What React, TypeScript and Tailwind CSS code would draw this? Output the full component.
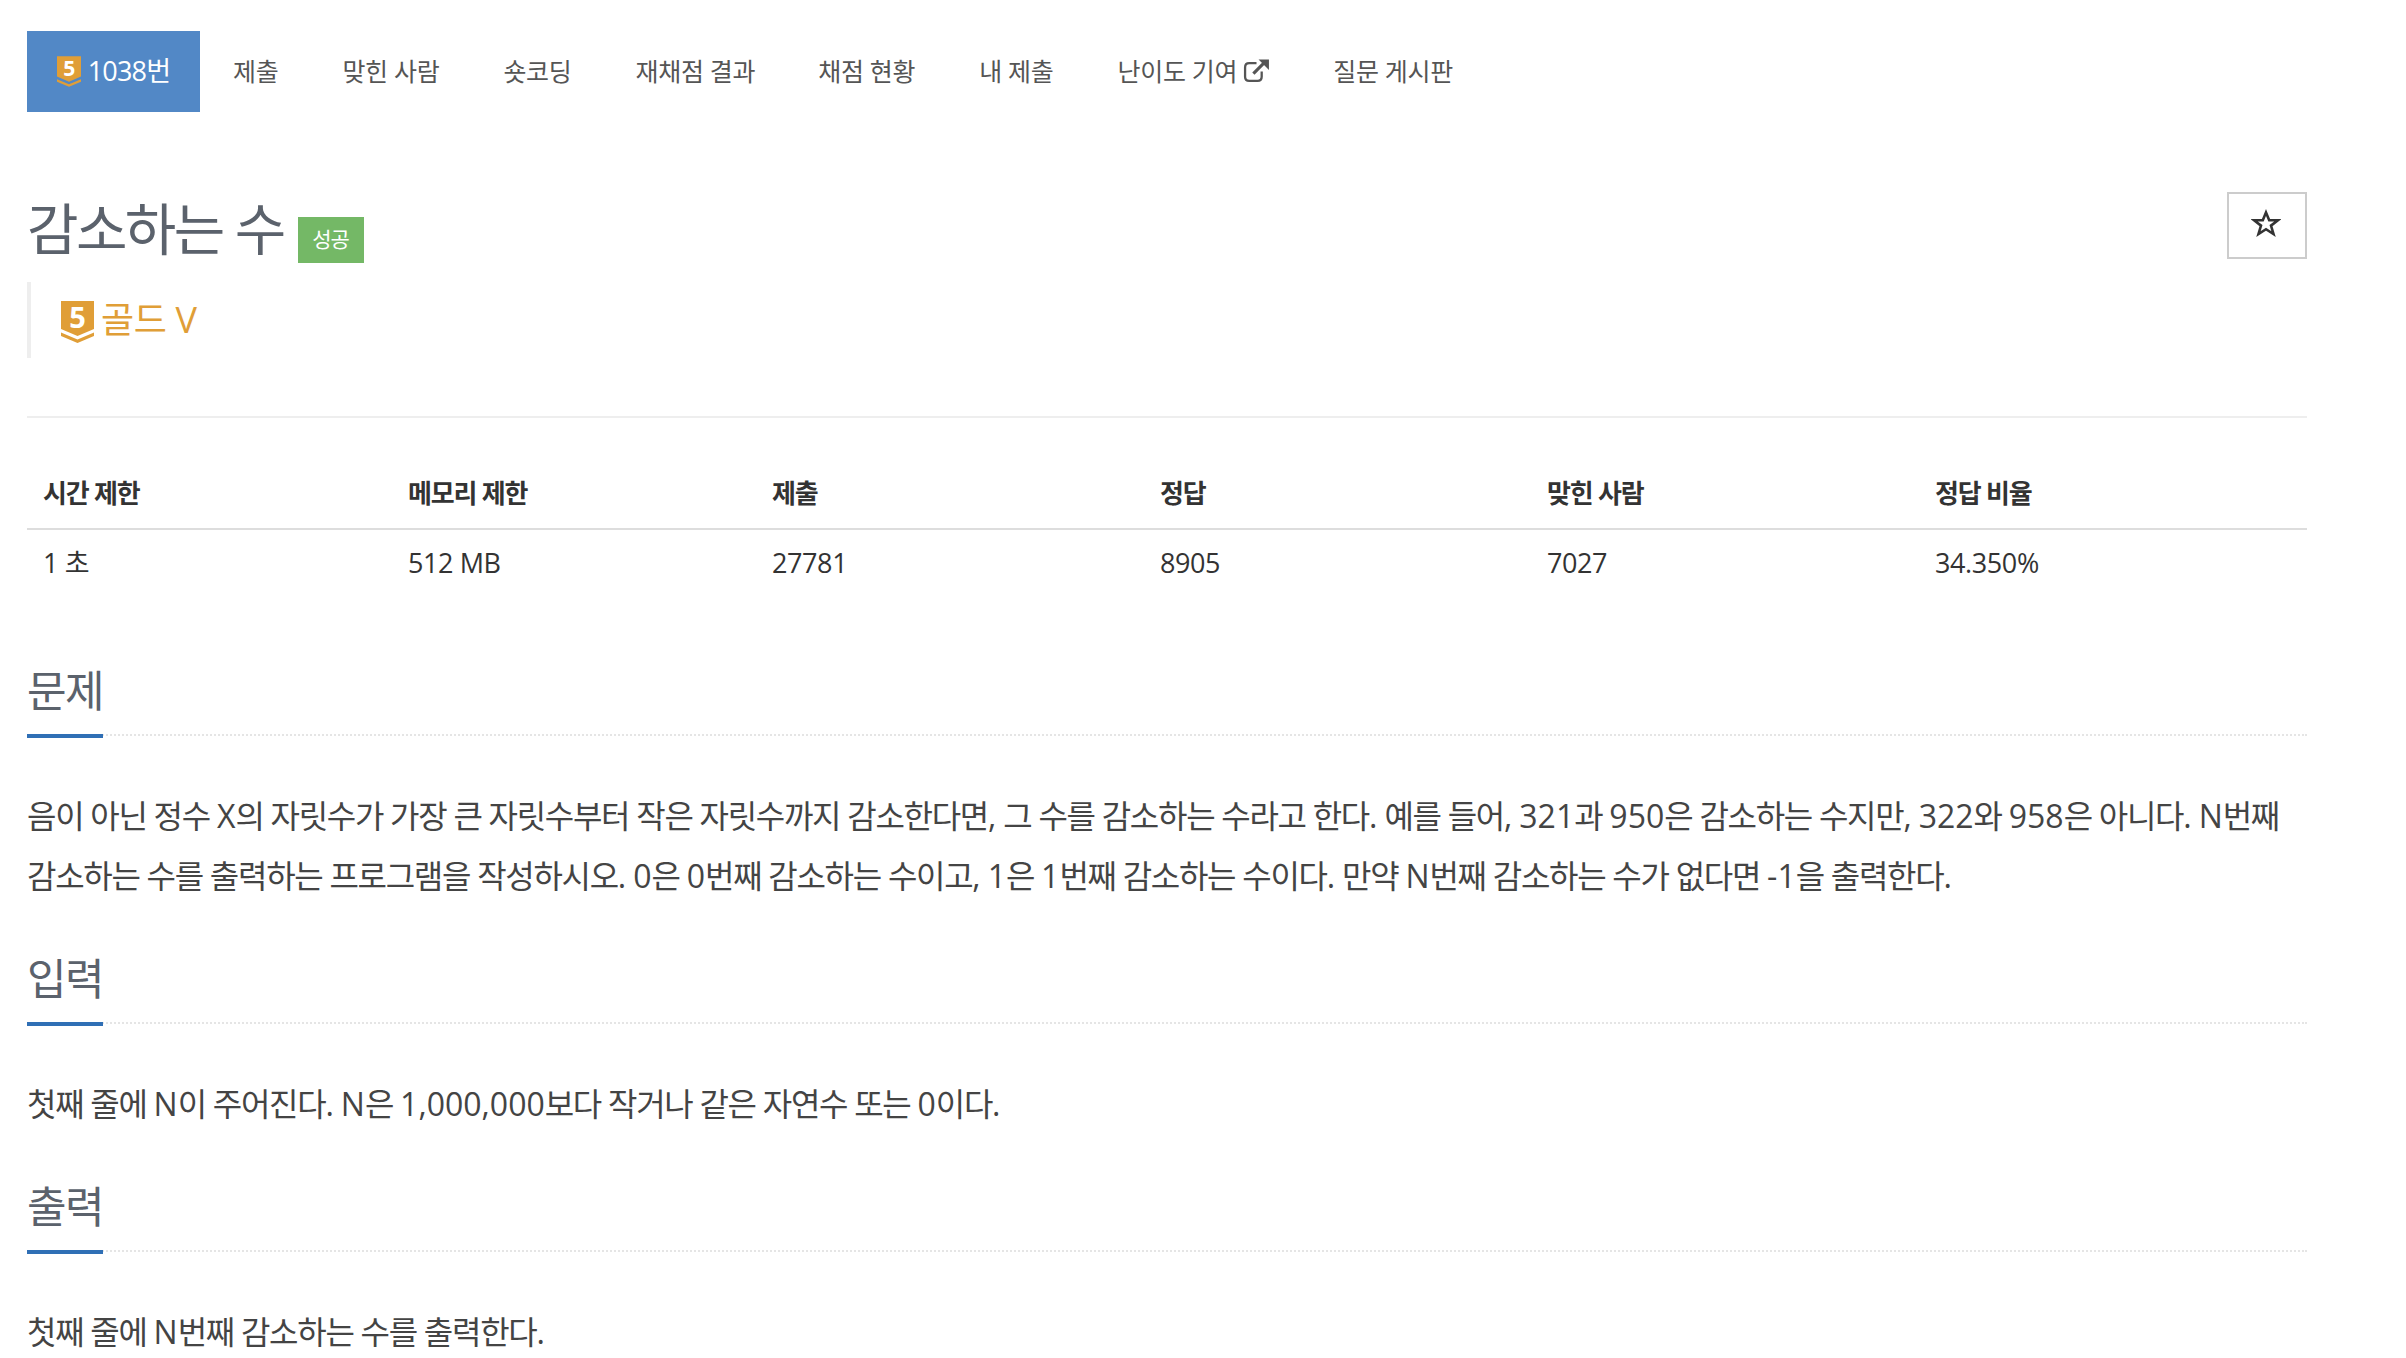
const FONT = "font-['Open_Sans','Noto_Sans_CJK_KR',sans-serif]";

function Tier({ w, h, size }: { w: number; h: number; size: number }) {
  return (
    <svg width={w} height={h} viewBox="0 0 33 42" className="shrink-0 overflow-visible">
      <path d="M0 0H33V28L16.5 35L0 28Z" fill="#e09e37" />
      <path d="M0 31.5L16.5 38.5L33 31.5V35L16.5 42L0 35Z" fill="#e09e37" />
      <text x="16.5" y="27" textAnchor="middle" fontSize={size} fontWeight="700" fill="#fff" fontFamily="Open Sans, sans-serif">5</text>
    </svg>
  );
}

function Tab({ label, ml, children }: { label: string; ml: string; children?: React.ReactNode }) {
  return (
    <a className={`flex h-[81px] items-center whitespace-nowrap text-[25px] tracking-[-0.3px] text-[#555] ${ml}`}>
      {label}
      {children}
    </a>
  );
}

function Mixed({ text }: { text: string }) {
  return (
    <>
      {text.split(/([A-Za-z0-9,.\-]+)/).map((part, i) =>
        i % 2 === 1 ? (
          <span key={i} className="tracking-[0px]">{part}</span>
        ) : (
          <span key={i} className="tracking-[-1.3px]">{part}</span>
        ),
      )}
    </>
  );
}

function Section({ title, text, mt }: { title: string; text: string; mt: string }) {
  return (
    <section className={mt}>
      <div className="h-[70px] border-b-2 border-dotted border-[#e5e5e5]">
        <h2 className="inline-block h-[72px] w-[76px] border-b-[4px] border-[#2f6fb5] text-[43px] leading-[50px] font-normal whitespace-nowrap text-[#5b626c] tracking-[-1.5px]">{title}</h2>
      </div>
      <p className="mt-[50px] text-[32px] leading-[60px] text-[#444]">
        <Mixed text={text} />
      </p>
    </section>
  );
}

export default function App() {
  const heads = ["시간 제한", "메모리 제한", "제출", "정답", "맞힌 사람", "정답 비율"];
  const vals = ["1 초", "512 MB", "27781", "8905", "7027", "34.350%"];
  const widths = ["w-[364px]", "w-[364px]", "w-[388px]", "w-[387px]", "w-[388px]", "w-[389px]"];
  return (
    <div className={`${FONT} h-[1358px] w-[2406px] overflow-hidden bg-white px-[27px] pt-[31px]`}>
      <div className="w-[2280px]">
        <nav className="flex">
          <a className="flex h-[81px] w-[173px] items-center justify-center gap-[7px] whitespace-nowrap bg-[#5288c6] text-[27px] tracking-[-0.8px] text-white">
            <Tier w={24} h={31} size={29} />
            1038번
          </a>
          <Tab label="제출" ml="ml-[33px]" />
          <Tab label="맞힌 사람" ml="ml-[64px]" />
          <Tab label="숏코딩" ml="ml-[64px]" />
          <Tab label="재채점 결과" ml="ml-[64px]" />
          <Tab label="채점 현황" ml="ml-[63px]" />
          <Tab label="내 제출" ml="ml-[64px]" />
          <Tab label="난이도 기여" ml="ml-[64px]">
            <svg width="27" height="25" viewBox="0 0 26 24" className="ml-[6px] mb-[2px]" fill="none" stroke="#555" strokeWidth="2.2">
              <path d="M18 13V18C18 20.5 16.5 22 14 22H6C3.5 22 2 20.5 2 18V9C2 6.5 3.5 5 6 5H13" />
              <path d="M10 15L22 3" strokeWidth="3" />
              <path d="M15 1.5H25V11.5Z" fill="#555" stroke="none" />
            </svg>
          </Tab>
          <Tab label="질문 게시판" ml="ml-[63px]" />
        </nav>

        <div className="relative mt-[71px] h-[235px] border-b-2 border-[#eee]">
          <div className="flex h-[90px] items-center">
            <h1 className="text-[56px] leading-[72px] font-normal tracking-[-2.6px] text-[#5b626c]">감소하는 수</h1>
            <span className="ml-[14px] mt-[24px] flex h-[46px] w-[66px] items-center justify-center bg-[#74b866] text-[21px] tracking-[-1px] text-white">성공</span>
          </div>
          <div className="mt-[9px] flex h-[76px] items-center gap-[7px] border-l-4 border-[#eee] pl-[30px] pt-[4px]">
            <Tier w={33} h={42} size={29} />
            <span className="mb-[4px] text-[36px] tracking-[-0.4px] text-[#e09e37]">골드 V</span>
          </div>
          <button className="absolute right-0 top-[9px] flex h-[67px] w-[80px] items-center justify-center border-2 border-[#ccc] bg-white pb-[6px] pr-[2px]">
            <svg width="30" height="28" viewBox="0 0 30 28" fill="none" stroke="#333" strokeWidth="2.6">
              <path d="M15 3.5L18.2 11.2H27L20 16.6L22.5 25L15 20.2L7.5 25L10 16.6L3 11.2H11.8Z" />
            </svg>
          </button>
        </div>

        <table className="mt-[47px] w-[2280px] table-fixed border-collapse text-[27px]">
          <thead>
            <tr className="h-[64px] border-b-[2px] border-[#ddd]">
              {heads.map((h, i) => (
                <th key={h} className={`${widths[i]} px-[17px] first:pl-[16px] pb-[7px] text-left text-[26px] font-bold tracking-[-1.2px] text-[#333]`}>{h}</th>
              ))}
            </tr>
          </thead>
          <tbody>
            <tr className="h-[71px]">
              {vals.map((v) => (
                <td key={v} className="px-[17px] first:pl-[16px] pb-[3px] text-[#333] tracking-[-0.4px]">{v}</td>
              ))}
            </tr>
          </tbody>
        </table>

        <Section mt="mt-[66px]" title="문제" text="음이 아닌 정수 X의 자릿수가 가장 큰 자릿수부터 작은 자릿수까지 감소한다면, 그 수를 감소하는 수라고 한다. 예를 들어, 321과 950은 감소하는 수지만, 322와 958은 아니다. N번째 감소하는 수를 출력하는 프로그램을 작성하시오. 0은 0번째 감소하는 수이고, 1은 1번째 감소하는 수이다. 만약 N번째 감소하는 수가 없다면 -1을 출력한다." />
        <Section mt="mt-[48px]" title="입력" text="첫째 줄에 N이 주어진다. N은 1,000,000보다 작거나 같은 자연수 또는 0이다." />
        <Section mt="mt-[48px]" title="출력" text="첫째 줄에 N번째 감소하는 수를 출력한다." />
      </div>
    </div>
  );
}
